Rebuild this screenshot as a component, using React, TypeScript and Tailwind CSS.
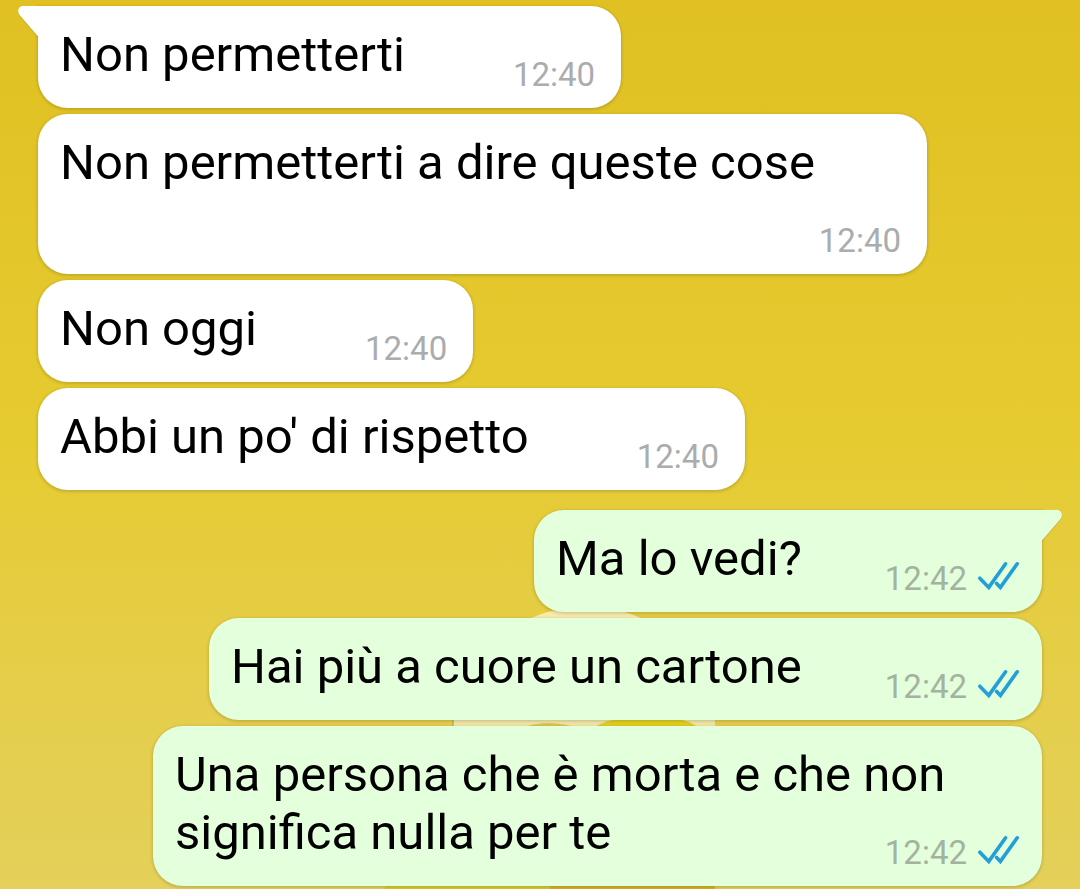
import React from "react";
import clsx from "clsx";

type Message = {
  text: string;
  time: string;
  mine?: boolean;
  first?: boolean;
};

const messages: Message[] = [
  { text: "Non permetterti", time: "12:40", first: true },
  { text: "Non permetterti a dire queste cose", time: "12:40" },
  { text: "Non oggi", time: "12:40" },
  { text: "Abbi un po' di rispetto", time: "12:40" },
  { text: "Ma lo vedi?", time: "12:42", mine: true, first: true },
  { text: "Hai più a cuore un cartone", time: "12:42", mine: true },
  {
    text: "Una persona che è morta e che non significa nulla per te",
    time: "12:42",
    mine: true,
  },
];

const ReadChecks: React.FC = () => (
  <svg
    viewBox="0 0 42 36"
    className="h-9 w-[42px]"
    fill="none"
    stroke="#209fd8"
    strokeWidth="3.6"
    strokeLinecap="round"
    role="img"
    aria-label="Letto"
  >
    <path d="M2.8 17.2 11.8 26.4 28.6 2.8" />
    <path d="M19.6 22.4 23.4 26.4 40.2 2.8" />
  </svg>
);

const Tail: React.FC<{ mine?: boolean }> = ({ mine }) => (
  <svg
    viewBox="0 0 22 34"
    aria-hidden="true"
    className={clsx(
      "absolute top-0 h-[34px] w-[22px]",
      mine ? "-right-5 -scale-x-100 text-[#e4ffdb]" : "-left-5 text-white"
    )}
  >
    <path
      d="M20 32 1.8 10.5C-1.6 6.5-.4 0 5 0H20Z"
      className="fill-black/10"
    />
    <path d="M22 30.5H20L2 9.5C-1.4 5.5.2 0 5 0H22Z" fill="currentColor" />
  </svg>
);

const Bubble: React.FC<{ message: Message }> = ({ message }) => {
  const { text, time, mine, first } = message;

  return (
    <li
      className={clsx(
        "relative flow-root max-w-[889px] rounded-[30px] pt-5 pb-[13px] pl-[22px] shadow-[0_1px_3px_1px_rgba(0,0,0,0.14)]",
        mine ? "self-end bg-[#e4ffdb] pr-[23px]" : "self-start bg-white pr-[26px]",
        first && (mine ? "rounded-tr-none" : "rounded-tl-none"),
        first && mine && "mt-[14px]"
      )}
    >
      {first && <Tail mine={mine} />}
      <span>{text}</span>
      {/* floats next to the last line, or drops below when there is no room */}
      <span
        className={clsx(
          "float-right mt-[29px] flex items-center gap-[10px] text-[33px] leading-10",
          mine ? "ml-[83px] text-[#a3b3a0]" : "ml-[108px] text-[#aaacae]"
        )}
      >
        <time>{time}</time>
        {mine && <ReadChecks />}
      </span>
    </li>
  );
};

// Wallpaper figure, mostly hidden behind the messages
const Wallpaper: React.FC = () => (
  <svg
    viewBox="0 0 360 290"
    aria-hidden="true"
    className="absolute bottom-0 left-1/2 h-[290px] w-[360px] -translate-x-1/2"
  >
    <ellipse cx="226" cy="72" rx="98" ry="64" fill="#f7ecab" />
    <path d="M93 118H355V200H93Z" fill="#f1e8a8" />
    <path d="M93 118V200" stroke="#a99b4c" />
    <path d="M160 130Q185 118 222 130Z" fill="#dcc64a" />
    <path d="M232 130Q246 120 262 120H315Q330 121 340 130Z" fill="#e2cf20" />
    <path d="M25 240H190V290H25Z" fill="#dccb2c" />
    <path d="M190 240H355V290H190Z" fill="#d9b326" />
  </svg>
);

const App: React.FC = () => {
  return (
    <main className="relative min-h-screen overflow-hidden bg-linear-to-b from-[#e0c022] via-[#e6cb30] to-[#e4d05a] font-[Roboto,sans-serif]">
      <Wallpaper />
      <ul className="relative flex flex-col gap-[6px] px-[38px] pt-[6px] text-[49px] leading-[58px] text-black">
        {messages.map((message) => (
          <Bubble key={message.text} message={message} />
        ))}
      </ul>
    </main>
  );
};

export default App;
